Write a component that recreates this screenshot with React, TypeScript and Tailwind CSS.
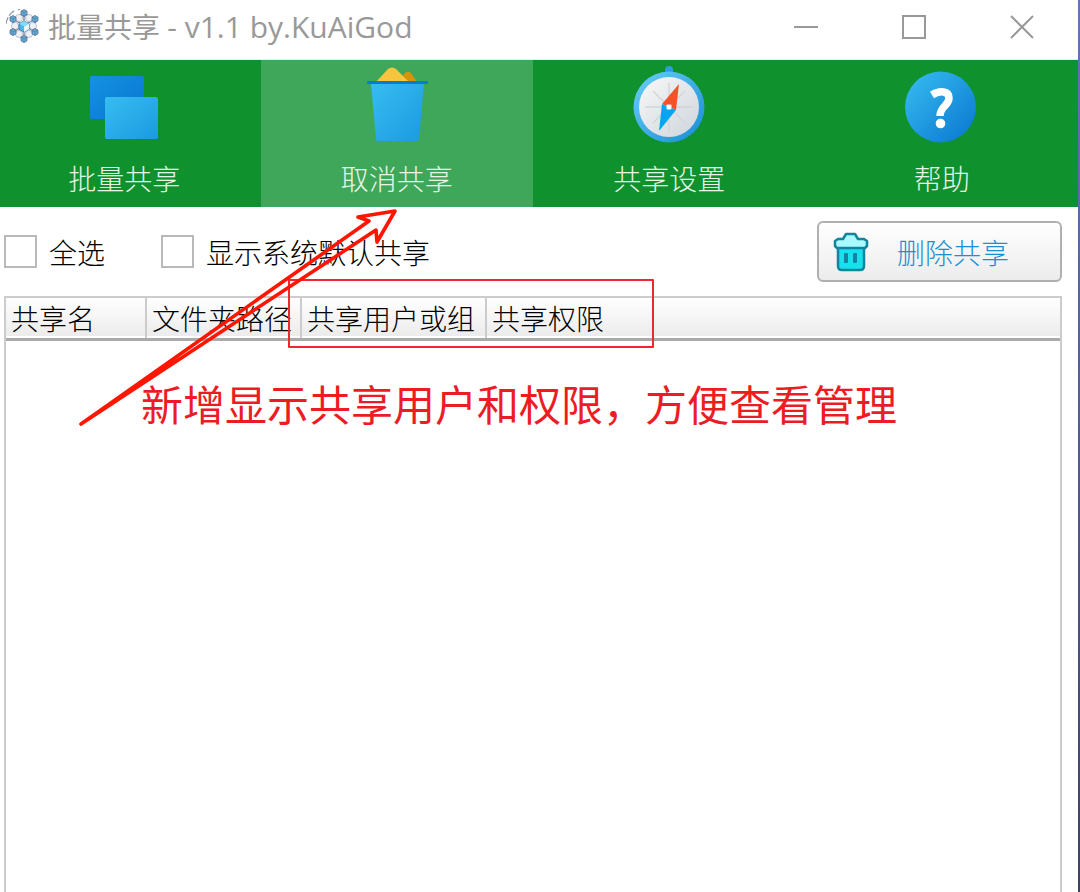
import type { ReactNode } from 'react'

function LogoIcon() {
  const outer = [
    [18, 4],
    [29, 10],
    [29, 23],
    [18, 30],
    [7, 23],
    [7, 10],
  ]

  return (
    <svg viewBox="0 0 36 36" className="h-9 w-9 shrink-0" fill="none" aria-hidden="true">
      <path d="M0 15C1 8 5 3 10 1M12 1l2-1" stroke="#8793ad" strokeWidth="1.2" strokeDasharray="7 2" />
      <path d="M18 4l11 6v13l-11 7-11-7V10zM18 4v26M7 10l22 13M29 10L7 23" stroke="#6d7791" strokeWidth="1.2" />
      {[[13, 9], [23, 9], [9, 17], [27, 17], [13, 25], [23, 25]].map(([x, y]) => (
        <circle key={`${x}-${y}`} cx={x} cy={y} r="3.6" fill="#edf0f4" stroke="#a8afbd" strokeWidth="0.7" />
      ))}
      {outer.map(([x, y]) => (
        <g key={`${x}-${y}`}>
          <path d={`M${x} ${y - 3.5}l3 1.7v3.6l-3 1.7-3-1.7v-3.6z`} fill="#5eb0dc" stroke="#56698d" strokeWidth="0.8" />
          <path d={`M${x - 3} ${y - 1.8}l3 1.5 3-1.5M${x} ${y}v3.5`} stroke="#56698d" strokeWidth="0.6" />
        </g>
      ))}
      <path d="M18 12l5 2.7v5.6L18 23l-5-2.7v-5.6z" fill="#49b9e9" stroke="#397ba8" />
      <path d="M18 12l5 2.7-5 2.6-5-2.6z" fill="#83dcf8" />
      <path d="M18 17.5l5-2.8v5.6L18 23z" fill="#eef5fa" />
    </svg>
  )
}

function WindowsIcon() {
  return (
    <svg viewBox="0 0 80 80" className="h-20 w-20" aria-hidden="true">
      <defs>
        <linearGradient id="backPane" x1="0" y1="0" x2="1" y2="1">
          <stop stopColor="#1492e2" />
          <stop offset="1" stopColor="#0875cf" />
        </linearGradient>
        <linearGradient id="frontPane" x1="0" y1="0" x2="1" y2="1">
          <stop stopColor="#37bdf0" />
          <stop offset="1" stopColor="#1b9ae1" />
        </linearGradient>
      </defs>
      <rect x="6" y="10" width="54" height="43" rx="2" fill="url(#backPane)" />
      <rect x="21" y="31" width="53" height="42" rx="2" fill="url(#frontPane)" />
    </svg>
  )
}

function BinIcon() {
  return (
    <svg viewBox="0 0 80 80" className="h-20 w-20" aria-hidden="true">
      <defs>
        <linearGradient id="binBody" x1="0" y1="0" x2="1" y2="1">
          <stop stopColor="#37bdf0" />
          <stop offset="1" stopColor="#1b9ae1" />
        </linearGradient>
      </defs>
      <path d="M60 16H42l5-8q3-4 7-1z" fill="#d6940b" />
      <path d="M19 16L31 3q4-3 8 0l13 13z" fill="#f8c63e" />
      <path d="M14 17h53l-5 56q0 2-3 2H22q-3 0-3-2z" fill="url(#binBody)" />
      <rect x="10" y="15" width="61" height="3" rx="1" fill="#087bd3" />
    </svg>
  )
}

function CompassIcon() {
  return (
    <svg viewBox="0 0 80 80" className="h-20 w-20" aria-hidden="true">
      <defs>
        <linearGradient id="compassRing" x1="0" y1="0" x2="1" y2="1">
          <stop stopColor="#6bcff8" />
          <stop offset="1" stopColor="#168bd5" />
        </linearGradient>
        <linearGradient id="compassFace" x1="0" y1="0" x2="1" y2="1">
          <stop stopColor="#f8f8f8" />
          <stop offset="1" stopColor="#ced5dc" />
        </linearGradient>
      </defs>
      <path d="M36 4a4 4 0 0 1 8 0v4h-8z" fill="#2e9ddd" />
      <circle cx="40" cy="41" r="35.5" fill="url(#compassRing)" />
      <circle cx="40" cy="41" r="30" fill="url(#compassFace)" />
      <path d="M16 41h48M40 17v48M24 25l32 32M24 57l32-32" stroke="#d2d5d8" strokeWidth="1.3" />
      <path d="M50 18l-17 20 14 6z" fill="#f4532a" />
      <path d="M30 65l3-27 14 6z" fill="#05a6ef" />
      <rect x="37.5" y="38.5" width="5" height="5" rx="1" fill="#fff" />
    </svg>
  )
}

function HelpIcon() {
  return (
    <svg viewBox="0 0 80 80" className="h-20 w-20" aria-hidden="true">
      <defs>
        <linearGradient id="helpDisc" x1="0" y1="0" x2="1" y2="1">
          <stop stopColor="#38bef1" />
          <stop offset="1" stopColor="#0875cf" />
        </linearGradient>
      </defs>
      <circle cx="38.5" cy="41" r="35.5" fill="url(#helpDisc)" />
      <path d="M30 29c8-5 17-4 17 3 0 8-9 8-9 18" fill="none" stroke="#fff" strokeWidth="7.5" />
      <circle cx="38.5" cy="57.5" r="4.8" fill="#fff" />
    </svg>
  )
}

function TrashIcon() {
  return (
    <svg viewBox="0 0 36 40" className="h-10 w-9 shrink-0" strokeLinejoin="round" aria-hidden="true">
      <path d="M5 15h26v19q0 4-4 4H9q-4 0-4-4z" fill="#16e2ee" stroke="#13849f" strokeWidth="2.5" />
      <path d="M2 14V9l3-2h5l3-5h9l3 5h6l3 2v5l-2 2H4z" fill="#a9fbff" stroke="#13849f" strokeWidth="2.5" />
      <rect x="11" y="21" width="4" height="10" rx="1" fill="#13849f" />
      <rect x="20" y="21" width="4" height="10" rx="1" fill="#13849f" />
    </svg>
  )
}

function TitleBar() {
  return (
    <header className="flex h-15 items-center border-b border-[#e3eeee] pb-1.5 pl-1.5">
      <LogoIcon />
      <h1 className="ml-1.5 flex-1 whitespace-nowrap font-['Open_Sans','Noto_Sans_CJK_SC',sans-serif] text-[28px] leading-9 font-normal text-[#999]">
        批量共享 <span className="text-[30px]">- v1.1 by.KuAiGod</span>
      </h1>
      <div className="flex shrink-0 items-center gap-7 pr-4 text-[#999]">
        <button type="button" aria-label="最小化" className="flex h-10 w-20 items-center justify-center">
          <svg viewBox="0 0 26 26" className="h-6.5 w-6.5" fill="none" stroke="currentColor" strokeWidth="2">
            <path d="M1 13h24" />
          </svg>
        </button>
        <button type="button" aria-label="最大化" className="flex h-10 w-20 items-center justify-center">
          <svg viewBox="0 0 26 26" className="h-6.5 w-6.5" fill="none" stroke="currentColor" strokeWidth="2">
            <path d="M2 2h22v22H2z" />
          </svg>
        </button>
        <button type="button" aria-label="关闭" className="flex h-10 w-20 items-center justify-center">
          <svg viewBox="0 0 26 26" className="h-6.5 w-6.5" fill="none" stroke="currentColor" strokeWidth="2">
            <path d="M2 2l22 22M24 2L2 24" />
          </svg>
        </button>
      </div>
    </header>
  )
}

function TabButton({ icon, label, active = false }: { icon: ReactNode; label: string; active?: boolean }) {
  return (
    <button
      type="button"
      aria-pressed={active}
      className={`flex flex-1 flex-col items-center pt-1.5 pb-[9px] ${active ? 'bg-[#3fa759]' : ''}`}
    >
      {icon}
      <span className="mt-3 text-[28px] leading-10 font-light text-[#e7f5e9]">{label}</span>
    </button>
  )
}

function CheckOption({ label }: { label: string }) {
  return (
    <label className="flex items-center gap-3 whitespace-nowrap">
      <input type="checkbox" className="h-[33px] w-[33px] appearance-none border-2 border-[#b9b9b9] bg-white checked:bg-[#3fa759]" />
      {label}
    </label>
  )
}

const columns = [
  { label: '共享名', width: 'w-[140px]' },
  { label: '文件夹路径', width: 'w-[155px]' },
  { label: '共享用户或组', width: 'w-[185px]' },
  { label: '共享权限', width: '' },
]

function ShareTable() {
  return (
    <div className="flex-1 border-x-2 border-t-2 border-[#ccc]">
      <table className="w-full table-fixed border-collapse">
        <thead>
          <tr className="h-[41px] border-b-3 border-[#aaa] bg-linear-to-b from-white to-[#ececec]">
            {columns.map((col) => (
              <th
                key={col.label}
                scope="col"
                className={`${col.width} overflow-hidden border-r-2 border-r-[#ccc] p-0 pl-[5px] text-left text-[28px] leading-9 font-light whitespace-nowrap last:border-r-0`}
              >
                {col.label}
              </th>
            ))}
          </tr>
        </thead>
        <tbody />
      </table>
    </div>
  )
}

// Callouts drawn over the window
function Annotations() {
  return (
    <div className="pointer-events-none absolute inset-0">
      <svg viewBox="0 0 700 440" className="absolute top-0 left-0 h-[440px] w-[700px]" fill="none" strokeLinejoin="round">
        <rect x="289" y="280" width="364" height="67" stroke="#ed2830" strokeWidth="2" />
        <path
          d="M81 424L369 221l-11-4 37-6-18 31-1-12L160 372z"
          stroke="#ff1500"
          strokeWidth="3.6"
        />
      </svg>
      <p className="absolute top-[373px] left-[141px] text-[42px] leading-[60px] whitespace-nowrap text-[#ed1c24]">
        新增显示共享用户和权限，方便查看管理
      </p>
    </div>
  )
}

export default function App() {
  return (
    <div className="relative flex min-h-screen overflow-hidden bg-white font-['Noto_Sans_CJK_SC',sans-serif] text-black">
      <div className="flex min-w-0 flex-1 flex-col">
        <TitleBar />
        <nav className="-ml-3 flex bg-[#0f912e]">
          <TabButton icon={<WindowsIcon />} label="批量共享" />
          <TabButton icon={<BinIcon />} label="取消共享" active />
          <TabButton icon={<CompassIcon />} label="共享设置" />
          <TabButton icon={<HelpIcon />} label="帮助" />
        </nav>
        <main className="flex flex-1 flex-col pr-4 pl-1">
          <div className="flex h-[89px] items-center gap-14 text-[28px] leading-9 font-light">
            <CheckOption label="全选" />
            <CheckOption label="显示系统默认共享" />
            <button
              type="button"
              className="ml-auto flex h-[61px] w-[245px] items-center gap-7 rounded-md border-2 border-[#b0b0b0] bg-linear-to-b from-white to-[#ececec] pl-3.5 text-[#1b8fd2]"
            >
              <TrashIcon />
              删除共享
            </button>
          </div>
          <ShareTable />
        </main>
      </div>
      <div className="w-0.5 bg-linear-to-b from-[#6673b5] via-[#535c92] to-[#3e4260]" />
      <Annotations />
    </div>
  )
}
